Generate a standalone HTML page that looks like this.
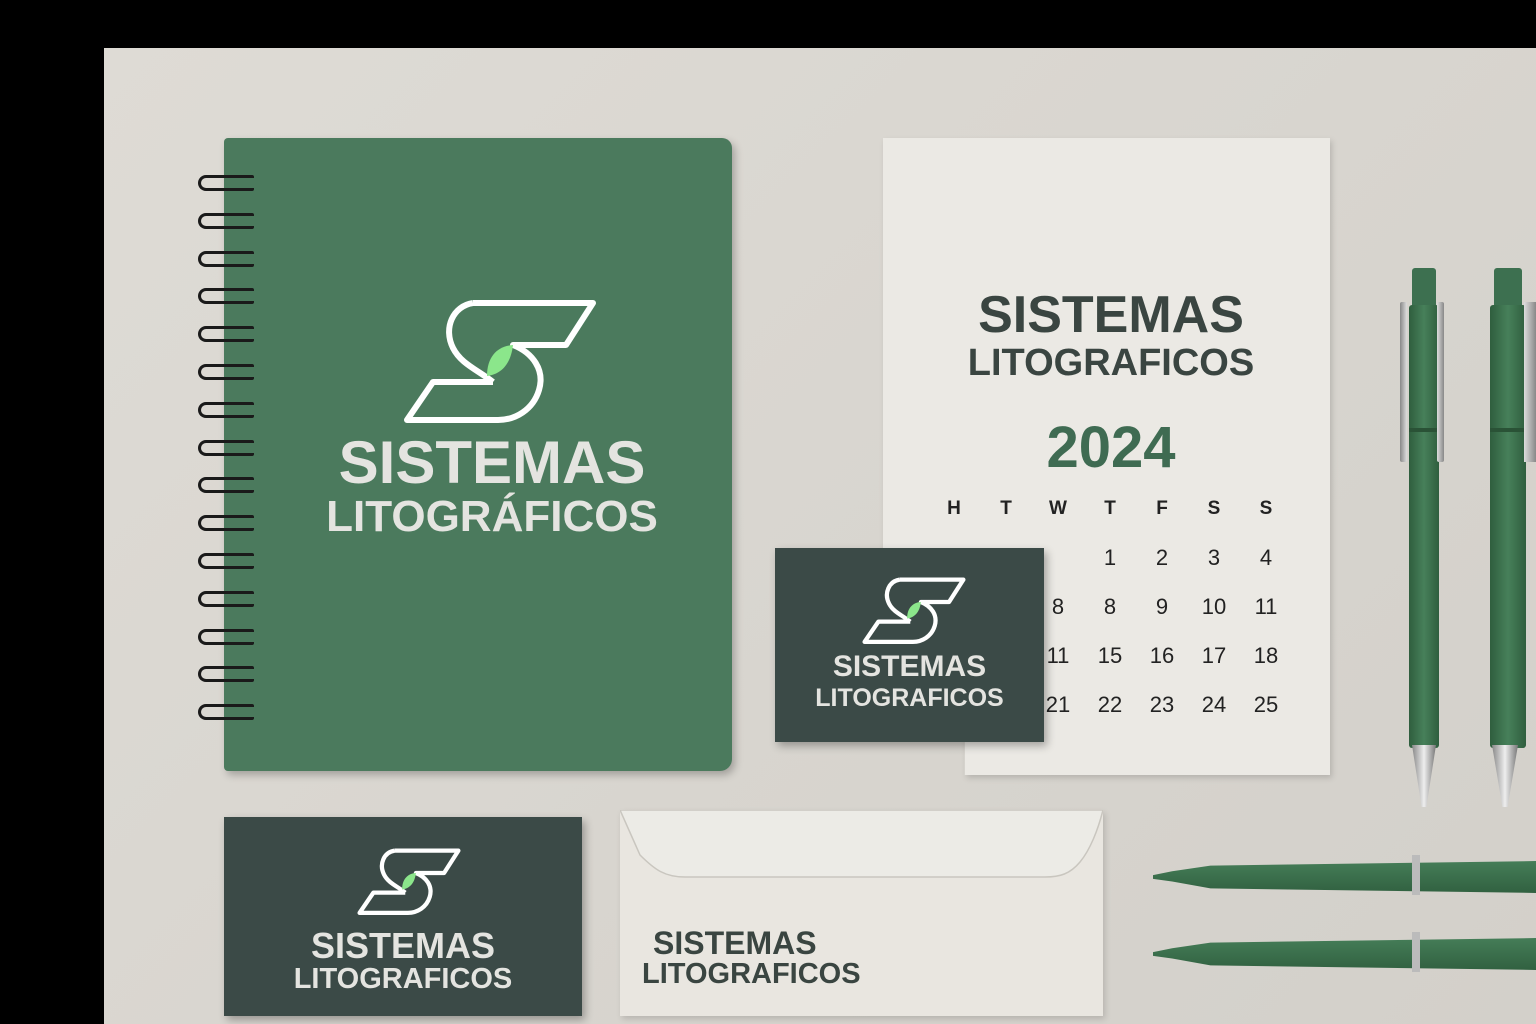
<!DOCTYPE html>
<html><head><meta charset="utf-8"><style>
*{margin:0;padding:0;box-sizing:border-box}
body{width:1536px;height:1024px;background:#000;position:relative;overflow:hidden;font-family:"Liberation Sans",Arial,sans-serif}
.a{position:absolute}
.bg{left:104px;top:48px;width:1432px;height:976px;background:linear-gradient(135deg,#dedbd5,#d3d0ca)}
.t{position:absolute;left:0;width:100%;text-align:center;font-weight:bold;white-space:nowrap}
.ring{position:absolute;left:198px;width:56px;height:16px;border:3px solid #1a1a1a;border-radius:8px 2px 2px 8px;border-right:none}
.cal td{width:52px;text-align:center;font-size:22px;color:#222;height:49px}
</style></head><body>
<div class="a bg"></div>

<!-- notebook -->
<div class="a" style="left:224px;top:138px;width:508px;height:633px;background:#4b7a5d;border-radius:4px 10px 12px 4px;box-shadow:3px 4px 8px rgba(0,0,0,.25)"></div>
<div id="rings"></div>
<svg class="a" style="left:403px;top:298px" width="194" height="128" viewBox="0 0 194 128">
<path d="M70 5 L190 5 L163 47 L110 47 C130 55 142 72 136 92 C130 112 112 122 95 122 L4 122 L30 84 L90 84 M70 5 C50 8 40 30 50 50 C58 66 75 72 90 84" fill="none" stroke="#fff" stroke-width="6" stroke-linejoin="round"/>
<path d="M110 47 C95 48 84 58 84 78 C100 76 108 64 110 47Z" fill="#8be68b"/>
</svg>
<div class="t" style="left:224px;width:536px;top:428px;font-size:60px;color:#e4e4e0">SISTEMAS</div>
<div class="t" style="left:224px;width:536px;top:492px;font-size:44px;color:#e4e4e0">LITOGRÁFICOS</div>

<!-- calendar -->
<div class="a" style="left:0;top:0;width:1536px;height:1024px;filter:drop-shadow(2px 3px 3px rgba(0,0,0,.15))">
<div class="a" style="left:883px;top:138px;width:447px;height:637px;background:#ebe9e4;clip-path:polygon(0 0,100% 0,100% 100%,18.3% 100%,18.3% 64.7%,0 64.7%)"></div>
</div>
<div class="t" style="left:883px;width:456px;top:285px;font-size:52px;color:#3a4541">SISTEMAS</div>
<div class="t" style="left:883px;width:456px;top:342px;font-size:38px;color:#3a4541">LITOGRAFICOS</div>
<div class="t" style="left:883px;width:456px;top:414px;font-size:58px;color:#3f6b52">2024</div>
<table class="a cal" style="left:928px;top:484px;border-collapse:collapse">
<tr style="font-weight:bold"><td style="font-size:19px">H</td><td style="font-size:19px">T</td><td style="font-size:19px">W</td><td style="font-size:19px">T</td><td style="font-size:19px">F</td><td style="font-size:19px">S</td><td style="font-size:19px">S</td></tr>
<tr><td></td><td></td><td></td><td>1</td><td>2</td><td>3</td><td>4</td></tr>
<tr><td></td><td></td><td>8</td><td>8</td><td>9</td><td>10</td><td>11</td></tr>
<tr><td></td><td></td><td>11</td><td>15</td><td>16</td><td>17</td><td>18</td></tr>
<tr><td></td><td></td><td>21</td><td>22</td><td>23</td><td>24</td><td>25</td></tr>
</table>

<!-- business card 1 -->
<div class="a" style="left:775px;top:548px;width:269px;height:194px;background:#3b4a47;box-shadow:3px 4px 8px rgba(0,0,0,.3)"></div>
<svg class="a" style="left:862px;top:577px" width="104" height="68" viewBox="0 0 194 128">
<path d="M70 5 L190 5 L163 47 L110 47 C130 55 142 72 136 92 C130 112 112 122 95 122 L4 122 L30 84 L90 84 M70 5 C50 8 40 30 50 50 C58 66 75 72 90 84" fill="none" stroke="#fff" stroke-width="8" stroke-linejoin="round"/>
<path d="M110 47 C95 48 84 58 84 78 C100 76 108 64 110 47Z" fill="#8be68b"/>
</svg>
<div class="t" style="left:775px;width:269px;top:650px;font-size:30px;color:#e4e4e0">SISTEMAS</div>
<div class="t" style="left:775px;width:269px;top:684px;font-size:25px;color:#e4e4e0">LITOGRAFICOS</div>

<!-- business card 2 -->
<div class="a" style="left:224px;top:817px;width:358px;height:199px;background:#3b4a47;box-shadow:3px 4px 8px rgba(0,0,0,.3)"></div>
<svg class="a" style="left:357px;top:848px" width="104" height="68" viewBox="0 0 194 128">
<path d="M70 5 L190 5 L163 47 L110 47 C130 55 142 72 136 92 C130 112 112 122 95 122 L4 122 L30 84 L90 84 M70 5 C50 8 40 30 50 50 C58 66 75 72 90 84" fill="none" stroke="#fff" stroke-width="8" stroke-linejoin="round"/>
<path d="M110 47 C95 48 84 58 84 78 C100 76 108 64 110 47Z" fill="#8be68b"/>
</svg>
<div class="t" style="left:224px;width:358px;top:925px;font-size:36px;color:#e4e4e0">SISTEMAS</div>
<div class="t" style="left:224px;width:358px;top:963px;font-size:29px;color:#e4e4e0">LITOGRAFICOS</div>

<!-- envelope -->
<div class="a" style="left:620px;top:810px;width:483px;height:206px;background:#e9e6e0;box-shadow:2px 3px 6px rgba(0,0,0,.15)"></div>
<svg class="a" style="left:620px;top:810px" width="483" height="72"><path d="M0 0 L483 0 C478 20 470 40 460 52 C450 64 440 67 425 67 L65 67 C45 67 35 60 20 45 L0 0Z" fill="#ecebe6" stroke="#c9c6bf" stroke-width="1.5"/></svg>
<div class="a" style="left:653px;top:925px;font-size:32px;font-weight:bold;color:#3a4541">SISTEMAS</div>
<div class="a" style="left:642px;top:958px;font-size:29px;font-weight:bold;color:#3a4541">LITOGRAFICOS</div>

<!-- vertical pens -->
<div class="a" style="left:1412px;top:268px;width:24px;height:40px;background:#3d7050;border-radius:3px"></div>
<div class="a" style="left:1409px;top:305px;width:30px;height:443px;background:linear-gradient(90deg,#2f5e3e,#47805a,#2f5e3e);border-radius:3px"></div>
<div class="a" style="left:1409px;top:428px;width:30px;height:4px;background:#2a5236"></div>
<div class="a" style="left:1400px;top:302px;width:7px;height:160px;background:linear-gradient(90deg,#888,#ddd);border-radius:2px"></div>
<div class="a" style="left:1437px;top:302px;width:7px;height:160px;background:linear-gradient(90deg,#ddd,#888);border-radius:2px"></div>
<div class="a" style="left:1412px;top:745px;width:24px;height:62px;background:linear-gradient(90deg,#888,#eee,#777);clip-path:polygon(0 0,100% 0,60% 100%,40% 100%)"></div>
<div class="a" style="left:1494px;top:268px;width:28px;height:40px;background:#3d7050;border-radius:3px"></div>
<div class="a" style="left:1490px;top:305px;width:36px;height:443px;background:linear-gradient(90deg,#2f5e3e,#47805a,#2f5e3e);border-radius:3px"></div>
<div class="a" style="left:1490px;top:428px;width:36px;height:4px;background:#2a5236"></div>
<div class="a" style="left:1524px;top:302px;width:12px;height:160px;background:linear-gradient(90deg,#ddd,#888)"></div>
<div class="a" style="left:1492px;top:745px;width:26px;height:62px;background:linear-gradient(90deg,#888,#eee,#777);clip-path:polygon(0 0,100% 0,60% 100%,40% 100%)"></div>

<!-- horizontal pens -->
<div class="a" style="left:1153px;top:858px;width:383px;height:38px;background:linear-gradient(#47805a,#2f5e3e);clip-path:polygon(0 45%,5% 35%,15% 20%,100% 8%,100% 92%,15% 80%,5% 62%,0 55%)"></div>
<div class="a" style="left:1412px;top:855px;width:8px;height:40px;background:#bbb"></div>
<div class="a" style="left:1153px;top:935px;width:383px;height:38px;background:linear-gradient(#47805a,#2f5e3e);clip-path:polygon(0 45%,5% 35%,15% 20%,100% 8%,100% 92%,15% 80%,5% 62%,0 55%)"></div>
<div class="a" style="left:1412px;top:932px;width:8px;height:40px;background:#bbb"></div>

<script>
var h='';for(var i=0;i<15;i++){h+='<div class="ring" style="top:'+(175+i*37.8)+'px"></div>';}
document.getElementById('rings').innerHTML=h;
</script>
</body></html>
